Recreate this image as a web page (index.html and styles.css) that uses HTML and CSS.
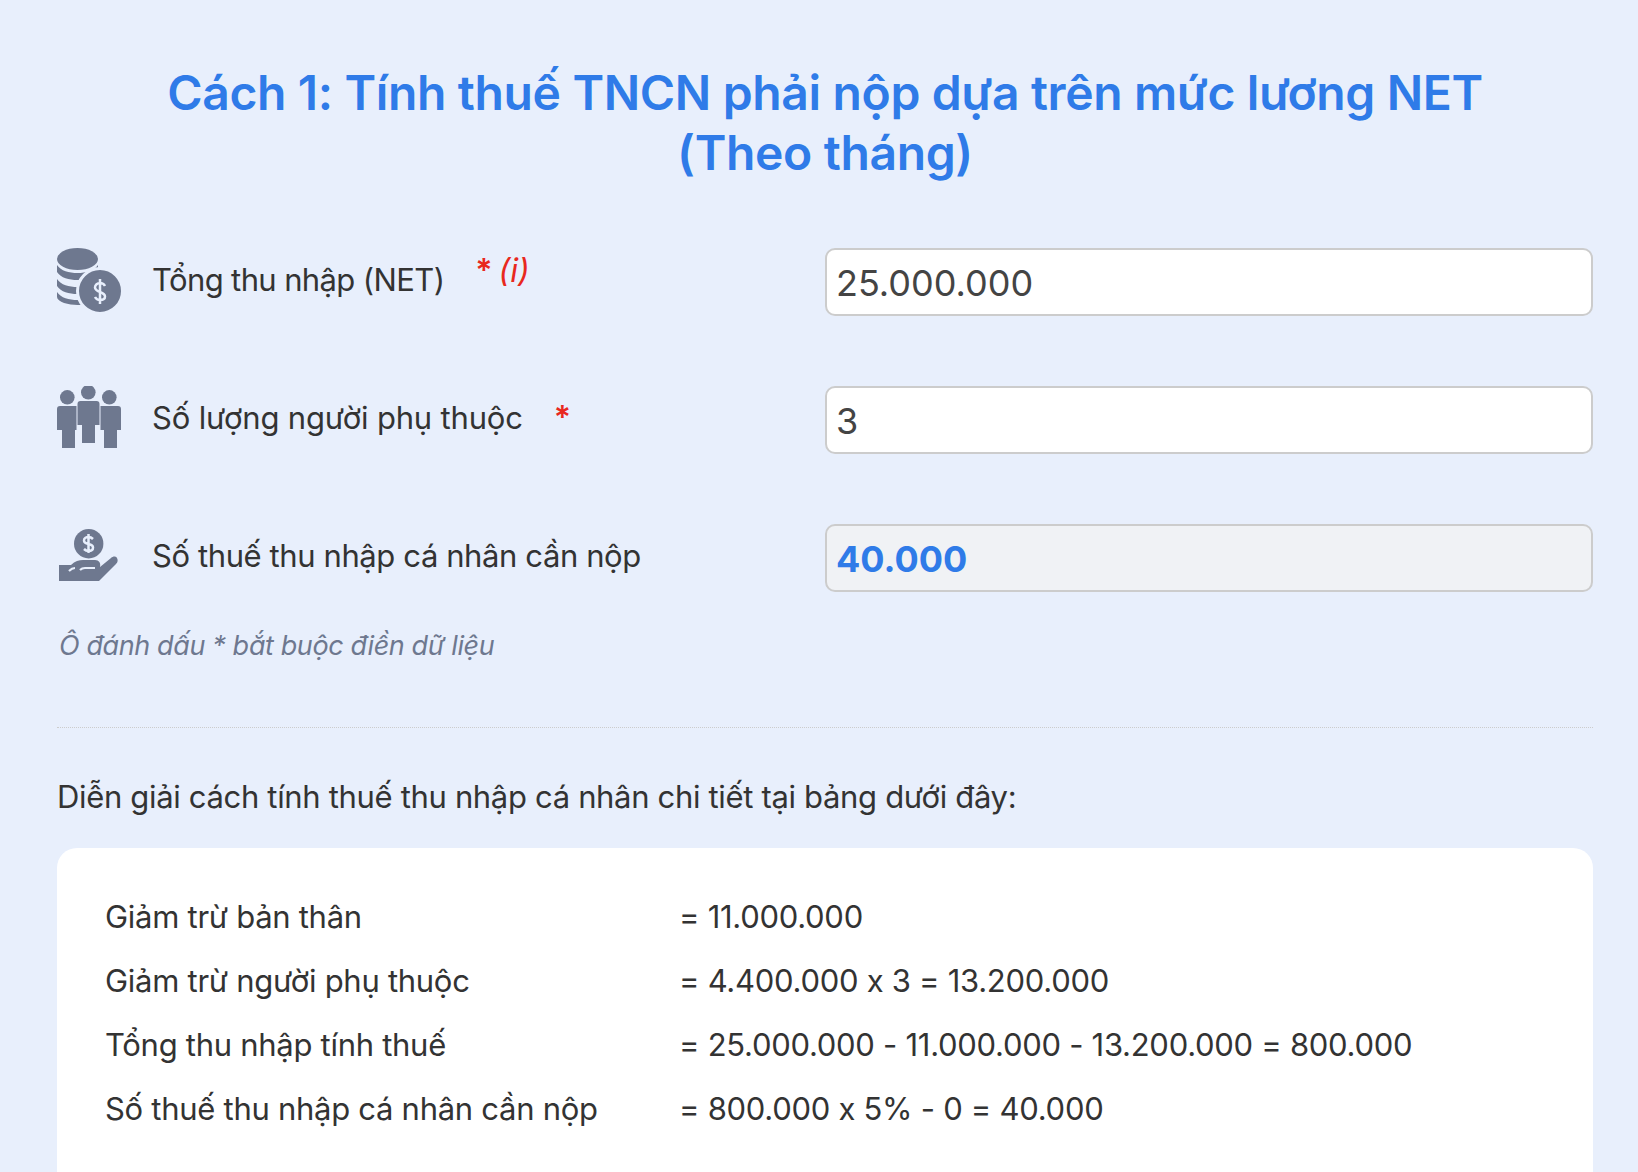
FILE: index.html
```html
<!DOCTYPE html>
<html lang="vi">
<head>
    <meta charset="UTF-8">
    <title>Tính thuế TNCN</title>
    <link rel="stylesheet" href="styles.css">
</head>
<body>
    <div class="container">
        <h1>Cách 1: Tính thuế TNCN phải nộp dựa trên mức lương NET<br>(Theo tháng)</h1>

        <div class="form-rows">
            <div class="form-row">
                <div class="label-col">
                    <svg class="icon" viewBox="0 0 64 64">
                        <ellipse cx="20.5" cy="11" rx="20.5" ry="11"/>
                        <path d="M0 17c4 6 12 8 20.5 8s16.500-2 20.500-8v7c-4 6-12 8-20.500 8S4 30 0 24z"/>
                        <path d="M0 31c4 6 12 8 20.500 8s16.500-2 20.500-8v7c-4 6-12 8-20.500 8S4 44 0 38z"/>
                        <path d="M0 44c4 6 12 8 20.500 8s16.500-2 20.500-8v5c-4 6-12 8-20.500 8S0 54 0 49z"/>
                        <circle class="coin" cx="43" cy="43" r="22.500"/>
                        <path class="icon-cut thin" d="M48 38c-1-2-2.500-3-5-3s-5 2-5 4.500 2.500 3.500 5 4.500 5 2 5 4.500-2.500 3.500-5 3.500-4-1-5-3M43 31v25"/>
                    </svg>
                    <span class="label-text label-net">Tổng thu nhập (NET)</span>
                    <span class="required required-top">*</span>
                    <i class="info">(i)</i>
                </div>
                <div class="field">25.000.000</div>
            </div>

            <div class="form-row">
                <div class="label-col">
                    <svg class="icon" viewBox="0 0 64 64">
                        <circle cx="10.300" cy="11.300" r="7.300"/>
                        <circle cx="31.300" cy="6.300" r="7.300"/>
                        <circle cx="52.300" cy="11.300" r="7.300"/>
                        <path d="M3 20h16.500v24H18v18H5V44H0V23a3 3 0 0 1 3-3z"/>
                        <path d="M23.500 15h16a3 3 0 0 1 3 3v21H38v18H25V39h-4.500V18a3 3 0 0 1 3-3z"/>
                        <path d="M43.500 20H61a3 3 0 0 1 3 3v21h-4v18H47V44h-3.500z"/>
                    </svg>
                    <span class="label-text label-dep">Số lượng người phụ thuộc</span>
                    <span class="required">*</span>
                </div>
                <div class="field">3</div>
            </div>

            <div class="form-row">
                <div class="label-col">
                    <svg class="icon" viewBox="0 0 64 64">
                        <circle cx="31.700" cy="19.700" r="14.700"/>
                        <path class="icon-cut thin" d="M36 15c-1-1-2.500-2-4.500-2s-4.500 1-4.500 3.500 2 3 4.500 3.500 4.500 1 4.500 3.500-2 3.500-4.500 3.500-3.500-1-4.500-2M31.500 10v19"/>
                        <path d="M2 41h12c4-4 8-5 12-5h12c4 0 6 3 5 7l11-9c2-2 5-2 6 0s1 4-1 6L42 57H2z"/>
                        <path class="icon-cut slot" d="M12 47c2-2 4-3 6-3M23 46c2-2 3-2 5-2h10"/>
                    </svg>
                    <span class="label-text">Số thuế thu nhập cá nhân cần nộp</span>
                </div>
                <div class="field field-result">40.000</div>
            </div>
        </div>

        <p class="note">Ô đánh dấu * bắt buộc điền dữ liệu</p>

        <hr class="divider">

        <p class="explain">Diễn giải cách tính thuế thu nhập cá nhân chi tiết tại bảng dưới đây:</p>

        <div class="detail-card">
            <div class="detail-row"><span>Giảm trừ bản thân</span><span>= 11.000.000</span></div>
            <div class="detail-row"><span>Giảm trừ người phụ thuộc</span><span>= 4.400.000 x 3 = 13.200.000</span></div>
            <div class="detail-row"><span>Tổng thu nhập tính thuế</span><span>= 25.000.000 - 11.000.000 - 13.200.000 = 800.000</span></div>
            <div class="detail-row"><span>Số thuế thu nhập cá nhân cần nộp</span><span>= 800.000 x 5% - 0 = 40.000</span></div>
        </div>
    </div>
</body>
</html>
```

FILE: styles.css
```css
body {
    font-family: Inter, "Noto Sans", sans-serif;
    margin: 0;
    background-color: #e8effc;
    color: #333;
}
.container {
    display: flex;
    flex-direction: column;
    box-sizing: border-box;
    height: 100vh;
    padding: 63px 45px 0 57px;
    overflow: hidden;
}
h1 {
    margin: 0 0 65px;
    color: #2f7be8;
    font-size: 48px;
    font-weight: 600;
    line-height: 60px;
    text-align: center;
    letter-spacing: -0.35px;
}
.form-rows {
    display: flex;
    flex-direction: column;
    gap: 70px;
}
.form-row {
    display: flex;
    align-items: flex-start;
    height: 68px;
}
.label-col {
    display: flex;
    align-items: center;
    width: 768px;
    height: 64px;
}
.icon {
    width: 64px;
    height: 64px;
    flex-shrink: 0;
    margin-right: 31px;
    fill: #6e788f;
}
.coin {
    stroke: #e8effc;
    stroke-width: 3;
}
.icon-cut {
    fill: none;
    stroke: #e8effc;
    stroke-width: 3;
}
.icon-cut.thin {
    stroke-width: 2.5;
}
.icon-cut.slot {
    stroke-width: 2.2;
}
.label-text {
    margin-bottom: 2px;
    font-size: 31px;
    letter-spacing: -0.4px;
}
.label-net {
    letter-spacing: -0.62px;
}
.label-dep {
    letter-spacing: -0.18px;
}
.required {
    margin-left: 31px;
    color: #e8281e;
    font-size: 32px;
    font-weight: 600;
    line-height: 32px;
}
.required-top {
    margin-top: -18px;
}
.info {
    margin: -18px 0 0 6px;
    color: #e8281e;
    font-size: 32px;
    line-height: 32px;
}
.field {
    flex: 1;
    box-sizing: border-box;
    height: 68px;
    padding: 0 9px;
    border: 2px solid #ccc;
    border-radius: 10px;
    background: white;
    color: #444;
    font-size: 36px;
    line-height: 66px;
}
.field-result {
    background: #f0f2f5;
    color: #2f7be8;
    font-weight: 700;
}
.note {
    margin: 37px 0 0 2px;
    color: #6e788f;
    font-size: 27px;
    font-style: italic;
    letter-spacing: -0.4px;
}
.divider {
    width: 100%;
    margin: 65px 0 0;
    border: none;
    border-top: 1px dotted #ccc;
}
.explain {
    margin: 50px 0 33px;
    font-size: 31px;
    letter-spacing: -0.33px;
}
.detail-card {
    flex: 1;
    padding: 36px 48px 0;
    background: white;
    border-radius: 20px 20px 0 0;
}
.detail-row {
    display: flex;
    height: 64px;
    align-items: center;
    font-size: 31px;
    letter-spacing: -0.28px;
}
.detail-row span:first-child {
    width: 574px;
}
```
